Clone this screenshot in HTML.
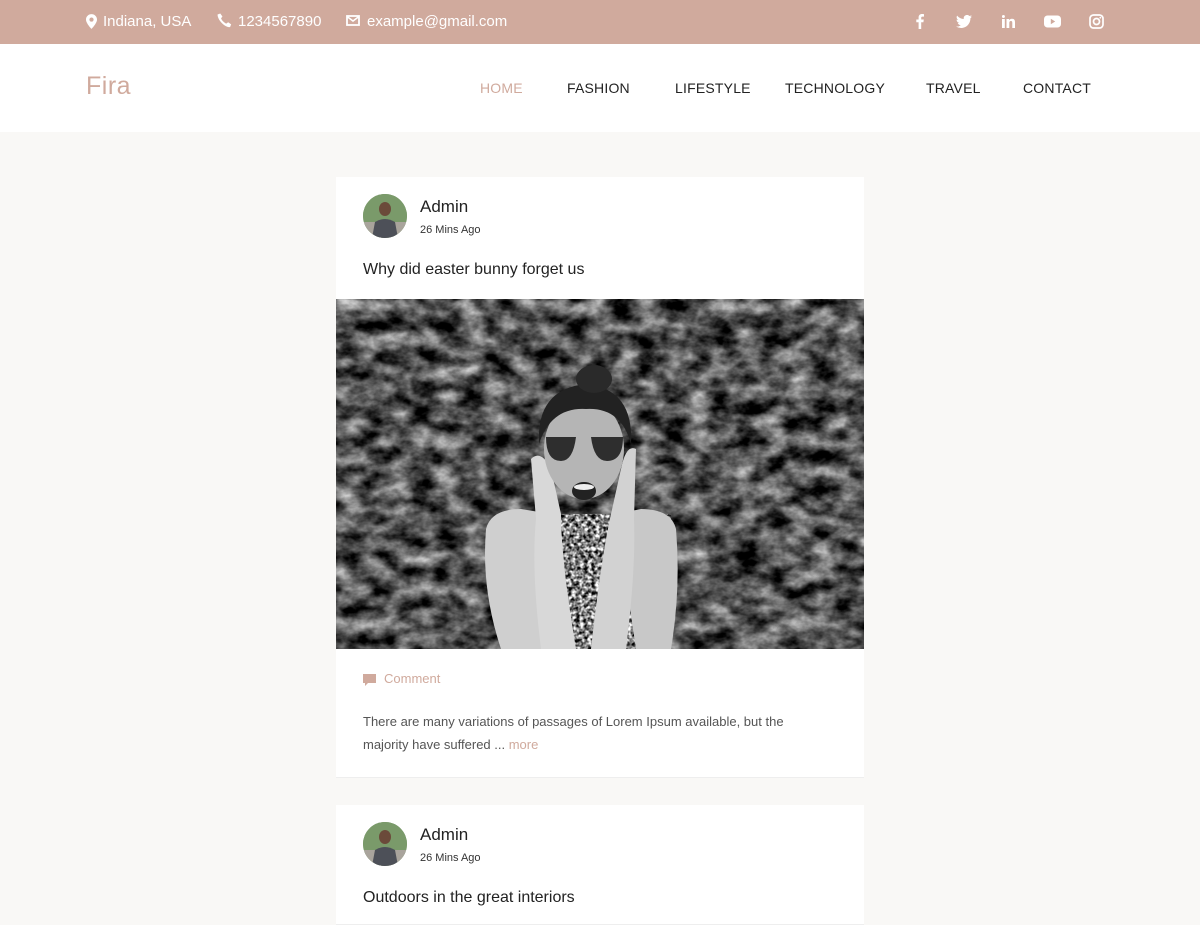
<!DOCTYPE html>
<html><head><meta charset="utf-8"><style>
*{margin:0;padding:0;box-sizing:border-box}
body{width:1200px;height:900px;overflow:hidden;background:#f9f8f6;font-family:"Liberation Sans",sans-serif;color:#222}
.top{height:44px;background:#d0aa9d;position:relative;color:#fff;font-size:15px}
.top span{position:absolute;top:13px;line-height:18px}
.top svg{position:absolute}
.nav{height:88px;background:#fff;position:relative}
.logo{position:absolute;left:86px;top:72px;font-size:25px;color:#d0aa9d;letter-spacing:.5px}
.menu a{position:absolute;top:80px;font-size:14px;color:#222;text-decoration:none;letter-spacing:.2px}
.card{position:absolute;left:336px;width:528px;background:#fff;border-bottom:1px solid #eee}
.av{position:absolute;left:27px;width:44px;height:44px;border-radius:50%;overflow:hidden;background:#6b8c5a}
.name{position:absolute;left:84px;font-size:17px;color:#222}
.time{position:absolute;left:84px;font-size:11px;color:#333}
.title{position:absolute;left:27px;font-size:16px;color:#222}
</style></head><body>
<div class="top">
<svg style="left:86px;top:14px" width="11" height="15" viewBox="0 0 12 16"><path d="M6 0C2.7 0 0 2.6 0 5.9 0 10 6 16 6 16s6-6 6-10.1C12 2.6 9.3 0 6 0zm0 8.2a2.3 2.3 0 1 1 0-4.6 2.3 2.3 0 0 1 0 4.6z" fill="#fff"/></svg>
<span style="left:103px">Indiana, USA</span>
<svg style="left:217px;top:13px" width="15" height="15" viewBox="0 0 16 16"><path d="M3.5 0.5l2.3 3.2-1.5 2c1 2.3 3.2 4.5 5.6 5.6l2-1.5 3.2 2.3-1.2 3C8.5 15.5 0.5 7.5 0.6 1.6z" fill="#fff"/></svg>
<span style="left:238px">1234567890</span>
<svg style="left:346px;top:15px" width="14" height="11" viewBox="0 0 14 11"><rect x="1" y="1" width="12" height="9" fill="none" stroke="#fff" stroke-width="1.8"/><path d="M1 1.5l6 4.5 6-4.5" fill="none" stroke="#fff" stroke-width="1.6"/></svg>
<span style="left:367px">example@gmail.com</span>
<svg style="left:916px;top:14px" width="8" height="15" viewBox="0 0 8 15"><path d="M5.2 15V8.2h2.2l.4-2.7H5.2V3.9c0-.8.2-1.3 1.3-1.3H8V.2C7.6.1 6.9 0 6 0 4 0 2.6 1.2 2.6 3.4v2.1H.3v2.7h2.3V15z" fill="#fff"/></svg>
<svg style="left:956px;top:15px" width="16" height="13" viewBox="0 0 16 13"><path d="M16 1.5c-.6.3-1.2.4-1.9.5.7-.4 1.2-1 1.4-1.8-.6.4-1.3.6-2.1.8A3.3 3.3 0 0 0 7.8 4 9.3 9.3 0 0 1 1.1.6a3.3 3.3 0 0 0 1 4.4c-.5 0-1-.2-1.5-.4 0 1.6 1.1 2.9 2.6 3.2-.5.1-1 .2-1.5.1.4 1.3 1.6 2.3 3.1 2.3A6.6 6.6 0 0 1 0 11.5 9.3 9.3 0 0 0 5 13c6 0 9.4-5 9.4-9.4v-.4c.6-.5 1.2-1 1.6-1.7z" fill="#fff"/></svg>
<svg style="left:1002px;top:15px" width="13" height="13" viewBox="0 0 13 13"><rect x="0" y="4" width="2.8" height="9" fill="#fff"/><circle cx="1.4" cy="1.5" r="1.5" fill="#fff"/><path d="M4.5 4h2.6v1.3C7.5 4.6 8.5 3.8 10 3.8c2.5 0 3 1.6 3 3.8V13h-2.7V8.2c0-1.1-.1-2.2-1.4-2.2s-1.6 1-1.6 2.2V13H4.5z" fill="#fff"/></svg>
<svg style="left:1044px;top:15px" width="17" height="13" viewBox="0 0 17 13"><rect x="0" y="0.5" width="17" height="12" rx="3.5" fill="#fff"/><path d="M6.8 3.8v5.4l4.4-2.7z" fill="#d0aa9d"/></svg>
<svg style="left:1089px;top:14px" width="15" height="15" viewBox="0 0 15 15"><rect x="1" y="1" width="13" height="13" rx="3.5" fill="none" stroke="#fff" stroke-width="1.7"/><circle cx="7.5" cy="7.5" r="3" fill="none" stroke="#fff" stroke-width="1.7"/><circle cx="11.3" cy="3.7" r=".9" fill="#fff"/></svg>
</div>
<div class="nav"></div>
<div class="logo">Fira</div>
<div class="menu">
<a style="left:480px;color:#d0aa9d">HOME</a>
<a style="left:567px">FASHION</a>
<a style="left:675px">LIFESTYLE</a>
<a style="left:785px">TECHNOLOGY</a>
<a style="left:926px">TRAVEL</a>
<a style="left:1023px">CONTACT</a>
</div>

<div class="card" style="top:177px;height:601px">
<div class="av" style="top:17px"><svg width="44" height="44"><rect width="44" height="44" fill="#7a9a6a"/><rect y="28" width="44" height="16" fill="#a9a49c"/><ellipse cx="22" cy="15" rx="6" ry="7" fill="#6b4a3a"/><path d="M9 44 L12 28 Q22 22 32 28 L35 44z" fill="#4d5058"/></svg></div>
<div class="name" style="top:20px">Admin</div>
<div class="time" style="top:47px">26 Mins Ago</div>
<div class="title" style="top:84px">Why did easter bunny forget us</div>
<svg style="position:absolute;left:0;top:122px" width="528" height="350" viewBox="0 0 528 350">
<defs>
<filter id="t" x="0" y="0" width="1" height="1" color-interpolation-filters="sRGB"><feTurbulence type="fractalNoise" baseFrequency="0.04 0.06" numOctaves="4" seed="5" result="r"/><feColorMatrix in="r" type="matrix" values="1.3 0 0 0 -0.33  1.3 0 0 0 -0.33  1.3 0 0 0 -0.33  0 0 0 0 1"/></filter>
<filter id="d" x="0" y="0" width="1" height="1" color-interpolation-filters="sRGB"><feTurbulence type="fractalNoise" baseFrequency="0.25" numOctaves="2" seed="8"/><feColorMatrix type="matrix" values="2.2 0 0 0 -0.6  2.2 0 0 0 -0.6  2.2 0 0 0 -0.6 0 0 0 0 1"/></filter></defs>
<rect width="528" height="350" fill="#3e3e3e"/>
<rect width="528" height="350" filter="url(#t)"/>
<rect x="175" y="215" width="160" height="135" filter="url(#d)"/>
<path d="M150 230 Q155 210 185 210 L215 215 L205 350 L165 350 Q145 290 150 230z" fill="#cfcfcf"/>
<path d="M340 230 Q335 210 305 210 L280 215 L300 350 L335 350 Q345 290 340 230z" fill="#c8c8c8"/>
<path d="M195 160 Q205 150 215 170 L225 215 Q225 260 240 350 L205 350 Q195 270 200 220z" fill="#d8d8d8"/>
<path d="M300 150 Q290 145 285 170 L275 215 Q265 260 255 350 L290 350 Q300 270 298 220z" fill="#d2d2d2"/>
<ellipse cx="248" cy="150" rx="40" ry="50" fill="#b5b5b5"/>
<path d="M203 145 Q200 90 250 85 Q298 90 295 145 Q285 108 250 110 Q215 108 203 145z" fill="#222"/>
<ellipse cx="258" cy="80" rx="18" ry="14" fill="#2a2a2a"/>
<path d="M210 138 h30 q-3 24 -15 24 q-15 0 -15 -24z M255 138 h32 q0 24 -16 24 q-13 0 -16 -24z" fill="#2e2e2e"/>
<ellipse cx="248" cy="192" rx="12" ry="9" fill="#222"/>
<ellipse cx="248" cy="188" rx="10" ry="3" fill="#eee"/>
</svg>
<svg style="position:absolute;left:27px;top:497px" width="13" height="12" viewBox="0 0 13 12"><path d="M0 0h13v9H5l-3 3V9H0z" fill="#d0aa9d"/></svg>
<div style="position:absolute;left:48px;top:494px;font-size:13px;color:#d0aa9d">Comment</div>
<div style="position:absolute;left:27px;top:533px;width:452px;font-size:13px;line-height:23px;color:#555">There are many variations of passages of Lorem Ipsum available, but the majority have suffered ... <span style="color:#d0aa9d">more</span></div>
</div>

<div class="card" style="top:805px;height:120px">
<div class="av" style="top:17px"><svg width="44" height="44"><rect width="44" height="44" fill="#7a9a6a"/><rect y="28" width="44" height="16" fill="#a9a49c"/><ellipse cx="22" cy="15" rx="6" ry="7" fill="#6b4a3a"/><path d="M9 44 L12 28 Q22 22 32 28 L35 44z" fill="#4d5058"/></svg></div>
<div class="name" style="top:20px">Admin</div>
<div class="time" style="top:47px">26 Mins Ago</div>
<div class="title" style="top:84px">Outdoors in the great interiors</div>
</div>
</body></html>
